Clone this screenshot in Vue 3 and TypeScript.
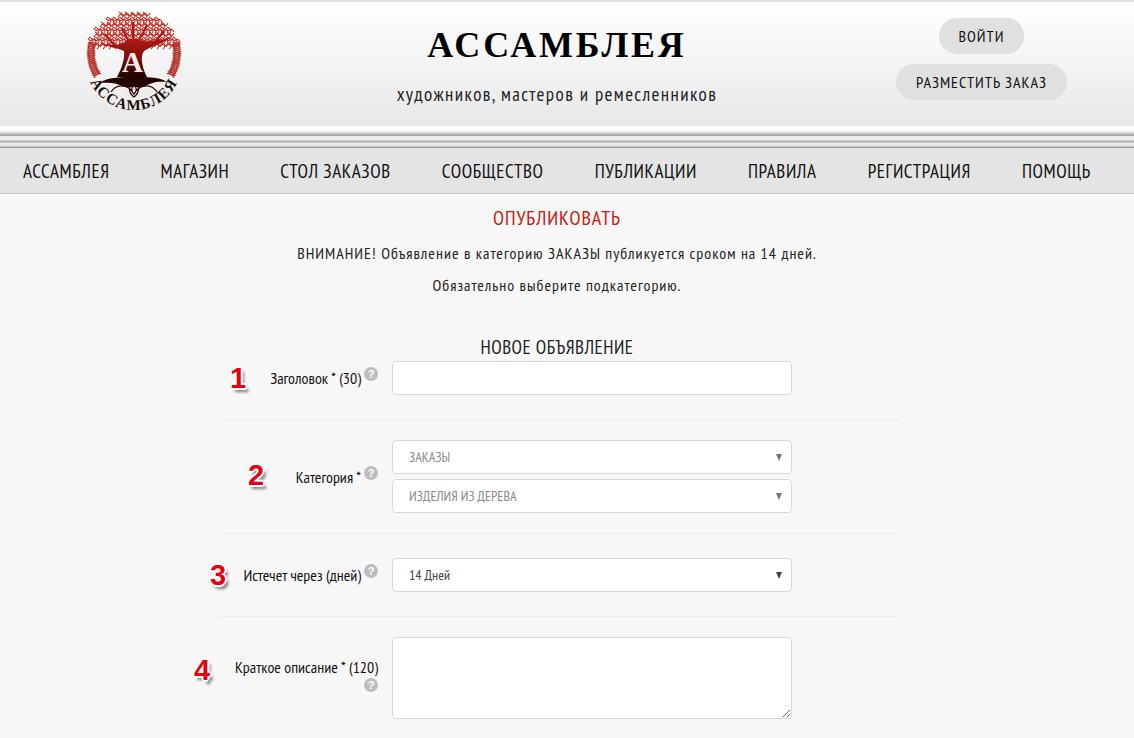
<script setup lang="ts">
import { ref } from 'vue';

const navItems = ['АССАМБЛЕЯ', 'МАГАЗИН', 'СТОЛ ЗАКАЗОВ', 'СООБЩЕСТВО', 'ПУБЛИКАЦИИ', 'ПРАВИЛА', 'РЕГИСТРАЦИЯ', 'ПОМОЩЬ'];
const title = ref('');
const summary = ref('');

// плетение кроны: маленькие петли внутри полуэллипса
const knots: string[] = [];
for (let y = 5; y < 36; y += 5) {
  for (let x = 8; x < 94; x += 6) {
    const dx = (x - 50) / 43;
    const dy = (36 - y) / 34;
    if (dx * dx + dy * dy > 1) continue;
    const s = (Math.round(x + y) % 2) * 2 - 1;
    knots.push(`M${x - 4} ${y + s * 2} C${x - 1} ${y - s * 5} ${x + 1} ${y + s * 5} ${x + 4} ${y - s * 2}`);
    knots.push(`M${x - 3} ${y - 3} Q${x + 4} ${y} ${x - 1} ${y + 4}`);
  }
}

// косички по бокам круга
function braid(side: number, phase: number): string {
  const pts: string[] = [];
  for (let t = 0; t <= 70; t++) {
    const a = ((-14 + (t / 70) * 46) * Math.PI) / 180;
    const r = 43 + 3.5 * Math.sin(t * 0.75 + phase);
    pts.push(`${(50 + side * r * Math.cos(a)).toFixed(1)} ${(43 + r * Math.sin(a)).toFixed(1)}`);
  }
  return 'M' + pts.join(' L');
}
const braids = [braid(-1, 0), braid(-1, Math.PI), braid(1, 0), braid(1, Math.PI)];
</script>

<template>
  <div class="page">
    <header class="top">
      <div class="logo">
        <svg width="100" height="102" viewBox="0 0 100 102">
          <defs>
            <path id="ring-text" d="M2 52 A48 48 0 0 0 98 52" />
            <linearGradient id="trunk" x1="0" y1="0" x2="0" y2="1">
              <stop offset="0" stop-color="#b81c15" />
              <stop offset="0.55" stop-color="#7a0f0a" />
              <stop offset="1" stop-color="#1e0402" />
            </linearGradient>
          </defs>
          <g fill="none" stroke="#c8281e" stroke-width="1.05">
            <path v-for="(d, i) in knots" :key="i" :d="d" />
          </g>
          <g fill="none" stroke="#b3352c" stroke-width="1.3">
            <path v-for="(d, i) in braids" :key="i" :d="d" />
          </g>
          <path d="M16 33 C28 36 36 36 42 31 C46 28 52 28 56 30 C64 33 78 30 90 26 C78 34 66 37 60 41 C56 46 58 58 63 67 L33 67 C38 58 41 48 40 41 C34 38 24 37 16 33Z" fill="url(#trunk)" />
          <path d="M44 30 L38 18 M55 30 L63 15 M49 28 L49 12 M30 35 L21 24 M70 33 L80 21" fill="none" stroke="#a81a14" stroke-width="2" />
          <path d="M15 73 C26 66 38 68 50 66 C62 68 74 66 83 72 C72 71 66 73 60 77 L40 77 C34 73 26 72 15 73Z" fill="#230503" />
          <path d="M27 82 C32 74 42 74 48 81 M73 82 C68 74 58 74 52 81 M50 72 C44 76 44 82 50 87 C56 82 56 76 50 72Z M50 75 C47 78 47 81 50 84 C53 81 53 78 50 75Z" fill="none" stroke="#2c0705" stroke-width="1.3" />
          <text x="48.5" y="62" text-anchor="middle" class="logo-a">А</text>
          <text class="logo-ring"><textPath href="#ring-text" startOffset="50%" text-anchor="middle">АССАМБЛЕЯ</textPath></text>
        </svg>
      </div>
      <div class="brand">
        <h1>АССАМБЛЕЯ</h1>
        <p>художников, мастеров и ремесленников</p>
      </div>
      <div class="actions">
        <a class="pill">ВОЙТИ</a>
        <a class="pill">РАЗМЕСТИТЬ ЗАКАЗ</a>
      </div>
    </header>
    <div class="stripes"></div>
    <nav class="menu">
      <a v-for="item in navItems" :key="item">{{ item }}</a>
    </nav>

    <main class="content">
      <h2 class="publish">ОПУБЛИКОВАТЬ</h2>
      <p class="note">ВНИМАНИЕ! Объявление в категорию ЗАКАЗЫ публикуется сроком на 14 дней.</p>
      <p class="note">Обязательно выберите подкатегорию.</p>
      <h3 class="form-title">НОВОЕ ОБЪЯВЛЕНИЕ</h3>

      <form class="form" @submit.prevent>
        <div class="row row-title">
          <div class="label">
            <span class="num n1">1</span>
            <span>Заголовок * (30)</span><i class="help">?</i>
          </div>
          <input v-model="title" class="field" type="text" />
        </div>

        <div class="row row-cat">
          <div class="label tall">
            <span class="num n2">2</span>
            <span>Категория *</span><i class="help">?</i>
          </div>
          <div class="stack">
            <div class="field select muted">ЗАКАЗЫ</div>
            <div class="field select muted">ИЗДЕЛИЯ ИЗ ДЕРЕВА</div>
          </div>
        </div>

        <div class="row row-exp">
          <div class="label">
            <span class="num n3">3</span>
            <span>Истечет через (дней)</span><i class="help">?</i>
          </div>
          <div class="field select dark">14 Дней</div>
        </div>

        <div class="row row-desc">
          <div class="label wrap">
            <span class="num n4">4</span>
            <span>Краткое описание * (120)</span><i class="help">?</i>
          </div>
          <textarea v-model="summary" class="field area"></textarea>
        </div>
      </form>
    </main>
  </div>
</template>

<style>
html, body {
  margin: 0;
  height: 738px;
  overflow: hidden;
  background: #f7f7f7;
}
</style>

<style scoped>
.page {
  font-family: "PT Sans Narrow", "Open Sans", sans-serif;
  color: #111;
  background: #f7f7f7;
  height: 738px;
  overflow: hidden;
}

.top {
  display: grid;
  grid-template-columns: 267px 580px 1fr;
  height: 124px;
  border-top: 2px solid #e0e0e0;
  background: linear-gradient(#ffffff, #e8e8e8);
}

.logo {
  display: flex;
  justify-content: center;
  padding-top: 8px;
}

.logo svg {
  overflow: visible;
}

.logo-a {
  font: bold 29px "Liberation Serif", serif;
  fill: #f6ece8;
}

.logo-ring {
  font: bold 15px "Liberation Serif", serif;
  letter-spacing: 1.3px;
  fill: #1a0c0a;
}

.brand {
  text-align: center;
}

.brand h1 {
  margin: 21px 0 0;
  font: bold 36px/44px "Liberation Serif", serif;
  letter-spacing: 2.8px;
  color: #000;
}

.brand p {
  margin: 16px 0 0;
  font-size: 19px;
  line-height: 22px;
  letter-spacing: 1.42px;
  color: #222;
}

.actions {
  display: flex;
  flex-direction: column;
  align-items: center;
  gap: 10px;
  padding: 16px 18px 0 0;
}

.pill {
  height: 36px;
  line-height: 36px;
  padding: 0 20px;
  border-radius: 18px;
  background: #e0e0e0;
  font-size: 16px;
  letter-spacing: 1px;
  color: #111;
}

.stripes {
  height: 22px;
  background: linear-gradient(
    #ffffff 0, #fbfbfb 5px, #a8a8a8 9px, #a8a8a8 10px,
    #ececec 10px, #efefef 14px, #adadad 15px, #b0b0b0 16px, #eaeaea 17px, #e6e6e6 20px, #a0a0a0 21px, #a0a0a0 22px
  );
}

.menu {
  display: flex;
  justify-content: space-between;
  align-items: center;
  height: 45px;
  padding: 0 43px 0 23px;
  background: #e4e4e4;
  border-bottom: 1px solid #ccc;
  font-size: 19px;
  letter-spacing: 0.6px;
  color: #111;
}

.content {
  width: 1114px;
  text-align: center;
}

.publish {
  margin: 13px 0 15px;
  font-size: 20px;
  line-height: 22px;
  font-weight: 400;
  letter-spacing: 0.95px;
  color: #c4200e;
}

.note {
  margin: 14px 0 0;
  font-size: 16px;
  line-height: 18px;
  letter-spacing: 1px;
  color: #222;
}

.form-title {
  margin: 42px 0 0;
  font-size: 19px;
  line-height: 22px;
  font-weight: 400;
  letter-spacing: 0.5px;
  color: #222;
}

.form {
  width: 679px;
  margin: 3px 0 0 219px;
  text-align: left;
}

.row {
  display: grid;
  grid-template-columns: 173px 400px;
  border-bottom: 1px solid #ebebeb;
}

.row-title { padding-bottom: 24px; }
.row-cat { padding: 20px 0 20px; }
.row-exp { padding: 24px 0 24px; }
.row-desc { padding-top: 20px; border-bottom: 0; }

.label {
  position: relative;
  display: flex;
  justify-content: flex-end;
  align-items: flex-start;
  padding: 7px 14px 0 0;
  font-size: 16px;
  line-height: 20px;
  color: #111;
  white-space: nowrap;
}

.label.tall {
  padding-top: 27px;
}

.label.wrap {
  padding-top: 20px;
}

.help {
  flex: none;
  width: 14px;
  height: 14px;
  margin: -1px 0 0 3px;
  border-radius: 50%;
  background: #bdbdbd;
  color: #fff;
  font: bold 11px/14px "Liberation Sans", sans-serif;
  text-align: center;
}

.label.wrap .help {
  position: absolute;
  right: 14px;
  top: 41px;
  margin: 0;
}

.num {
  position: absolute;
  font: bold 29px/30px "Liberation Sans", sans-serif;
  color: #e8000f;
  text-shadow: -2px 0 0 #fff, 2px 0 0 #fff, 0 -2px 0 #fff, 0 2px 0 #fff, -1px -1px 0 #fff, 1px -1px 0 #fff, -1px 1px 0 #fff, 1px 1px 0 #fff, 3px 4px 3px rgba(0, 0, 0, 0.5);
}

.n1 { left: 11px; top: 2px; }
.n2 { left: 29px; top: 20px; }
.n3 { left: -9px; top: 2px; }
.n4 { left: -25px; top: 18px; }

.field {
  box-sizing: border-box;
  display: block;
  width: 400px;
  height: 34px;
  border: 1px solid #d8d8d8;
  border-radius: 4px;
  background: #fff;
  padding: 0 16px;
  margin: 0;
  outline: none;
  font-family: inherit;
}

.stack {
  display: flex;
  flex-direction: column;
  gap: 5px;
}

.select {
  position: relative;
  line-height: 32px;
  font-size: 14px;
  letter-spacing: 0.05px;
}

.select::after {
  content: '';
  position: absolute;
  right: 9px;
  top: 13px;
  border-left: 3.5px solid transparent;
  border-right: 3.5px solid transparent;
  border-top: 7px solid #777;
}

.muted { color: #8a8a8a; }
.dark { color: #444; }
.dark::after { border-top-color: #444; }

.area {
  height: 82px;
  resize: vertical;
  padding: 8px 16px;
}
</style>
